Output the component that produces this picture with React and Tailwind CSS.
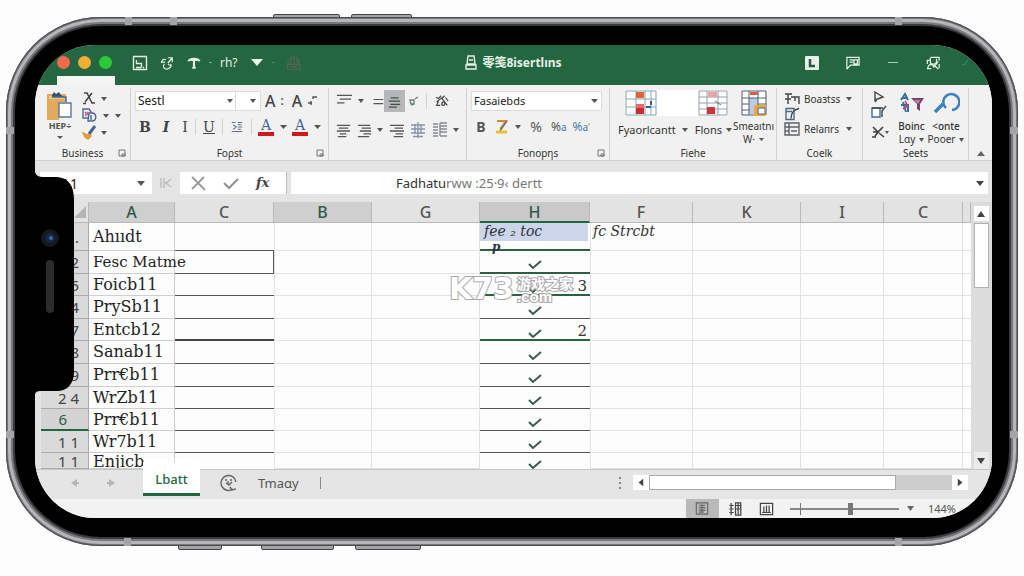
const Caret = ({ className = 'w-[6px] h-1 text-[#555]' }) => (
  <svg className={`shrink-0 ${className}`} viewBox="0 0 8 5" fill="currentColor" preserveAspectRatio="none">
    <path d="M0 0h8L4 5z" />
  </svg>
);

const Icon = ({ className = 'w-4 h-4', box = '0 0 16 16', children }) => (
  <svg
    className={`shrink-0 ${className}`}
    viewBox={box}
    fill="none"
    stroke="currentColor"
    strokeWidth="1.4"
  >
    {children}
  </svg>
);

const Tool = ({ label, className = '', children }) => (
  <button type="button" aria-label={label} className={`flex items-center justify-center shrink-0 ${className}`}>
    {children}
  </button>
);

const Group = ({ title, launcher, className, children }) => (
  <section className={`flex flex-col mt-[3px] h-[72px] border-r border-[#d2d2d2] ${className}`}>
    <div className="flex-1">{children}</div>
    <footer className="relative flex h-[14px] items-center justify-center text-[10px] leading-[14px] text-[#333]">
      {title}
      {launcher && (
        <button type="button" aria-label={`${title} options`} className="absolute right-1 top-[3px]">
          <Icon className="w-2 h-2 text-[#777]" box="0 0 8 8">
            <path d="M1 1h6v6H1zM4 5h3v2H4z" strokeWidth="1" />
          </Icon>
        </button>
      )}
    </footer>
  </section>
);

const Divider = () => <span className="w-px h-4 bg-[#d2d2d2] shrink-0" />;

/* rows of text lines used by the paragraph buttons */
const Lines = ({ d, className = 'w-[15px] h-[15px] text-[#555]' }) => (
  <Icon className={className}>
    <path d={d} />
  </Icon>
);

const LetterColor = () => (
  <span className="flex flex-col items-center w-4">
    <span className="font-['DejaVu_Serif',serif] text-[14px] leading-[14px] text-[#3d67a5]">A</span>
    <span className="h-1 w-full bg-[#d01818]" />
  </span>
);

const TitleBar = () => (
  <header className="h-10 bg-[#23663f] text-[#e6f0e9]">
    <div className="grid h-[31px] grid-cols-[1fr_auto_1fr] items-center pt-1">
      <div className="flex items-center">
        <div className="flex gap-2 pl-[22px]">
          <span className="w-[13px] h-[13px] rounded-full bg-[#f2694b]" />
          <span className="w-[13px] h-[13px] rounded-full bg-[#efae37]" />
          <span className="w-[13px] h-[13px] rounded-full bg-[#2bcb38]" />
        </div>
        <Tool label="Save" className="ml-5">
          <Icon>
            <path d="M1.500 1.500h13v13h-13zM4 12.500h5M4.500 5v3.500h5v4M11 12l1 1" />
          </Icon>
        </Tool>
        <Tool label="Link" className="ml-3">
          <Icon className="w-[14px] h-4">
            <path d="M9 2h5v5M14 2L9 8M7 4C4 3 1 5 2 8M1 7h5M5 9c-2 3-1 6 3 6 4-1 6-4 4-6M9 9l4 3" />
          </Icon>
        </Tool>
        <Tool label="Text" className="ml-[13px]">
          <Icon className="w-[14px] h-4">
            <path d="M1.500 6c2-4 11-4 13 0M4 4.500h8" strokeWidth="2.200" />
            <path d="M8 4v9M6 13.500h4" strokeWidth="2.400" />
          </Icon>
        </Tool>
        <span className="ml-2 w-[3px] h-px bg-[#7fa98e]" />
        <button type="button" className="ml-2 w-4 text-[12px] leading-4">rh?</button>
        <Tool label="More" className="ml-[15px]">
          <Caret className="w-3 h-[7px] text-[#eef5f0]" />
        </Tool>
        <span className="ml-[9px] w-[3px] h-px bg-[#4d8462]" />
        <Tool label="Print" className="ml-[11px]">
          <Icon className="w-4 h-4 text-[#4c6654]">
            <path d="M2 9C2 4 4 2 8 2s5 2 5 7M5 3v6M8 3v6M11 3v6M1.500 9.500h13v5h-13zM4 12h8" />
          </Icon>
        </Tool>
      </div>
      <h1 className="flex items-center gap-[5px] text-[12px] leading-4 font-bold font-['Noto_Sans','Noto_Sans_CJK_SC',sans-serif]">
        <Icon className="w-3 h-[15px]" box="0 0 12 15">
          <path d="M3 1h6l1 8H2zM1 10h10v4H1zM4 5h4" />
        </Icon>
        零笺8isertlıns
      </h1>
      <div className="flex items-center justify-end pr-[23px]">
        <Tool label="Account">
          <svg className="w-[14px] h-[14px]" viewBox="0 0 14 14">
            <rect width="14" height="14" rx="1" fill="#e8eeea" />
            <path d="M5 3v7h5" stroke="#2b5940" strokeWidth="2.500" fill="none" />
          </svg>
        </Tool>
        <Tool label="Comments" className="ml-[27px]">
          <Icon className="w-[14px] h-[14px]">
            <path d="M1 15V1.500h14v9H5L1 15M4 4.500h11M4 7h4M9 5v4h4V5" />
          </Icon>
        </Tool>
        <Tool label="Minimize" className="ml-7">
          <span className="w-[10px] h-px bg-[#a9cdd0]" />
        </Tool>
        <Tool label="Restore" className="ml-7">
          <Icon className="w-[14px] h-[14px]">
            <path d="M5 1.500h10v4M1.500 9V5h3M5 2v5c0 3 6 3 7 0V3M2 14.500c0-3 2-5 5-5l2 3 5-6M9 10l5 5M1 14.500h5M15 9v5" />
          </Icon>
        </Tool>
        <Tool label="Done" className="ml-[21px]">
          <Icon className="w-2 h-2 text-[#3f9563]" box="0 0 8 8">
            <path d="M1 5l2 1 4-5" strokeWidth="1" />
          </Icon>
        </Tool>
      </div>
    </div>
    <div className="ml-[22px] h-[9px] w-[58px] bg-[#f4f4f4]" />
  </header>
);

const ClipboardGroup = () => (
  <Group title="Business" launcher className="w-[96px] shrink-0">
    <div className="flex pt-[3px] pl-3">
      <Tool label="Paste" className="w-[26px] flex-col">
        <svg className="w-[26px] h-[28px]" viewBox="0 0 26 28">
          <path d="M0 2h19v8h-7v18H0z" fill="#e3a95c" />
          <path d="M2 4h16v3H2z" fill="#e8c68e" />
          <path d="M5 3l2-3 2 2 3-2 2 3 3 2H5z" fill="#38536b" />
          <path d="M5 5h14v5" stroke="#3f6a94" strokeWidth="1.4" fill="none" />
          <path d="M12 11h12v14H12z" fill="#fff" stroke="#56789b" strokeWidth="1.4" />
        </svg>
        <span className="text-[9px] leading-3 font-bold text-[#555]">HEP÷</span>
        <Caret className="mt-1 w-[6px] h-[3px] text-[#555]" />
      </Tool>
      <div className="ml-[9px] flex flex-col gap-[2px]">
        <Tool label="Cut" className="gap-[5px] justify-start">
          <Icon className="w-[14px] h-[15px] text-[#444]" box="0 0 14 15">
            <path d="M2 2h3l5 10h3M10 2L3 11" strokeWidth="1.500" />
            <path d="M1 12.500h3" />
          </Icon>
          <Caret />
        </Tool>
        <Tool label="Copy" className="gap-[6px] justify-start">
          <Icon className="w-[15px] h-[15px]" box="0 0 15 15">
            <path d="M1 1h6l2 3v6H1z" stroke="#51698b" />
            <path d="M3 4l4 4M3 8l3-4" stroke="#c0628f" />
            <path d="M7 5h3c5 0 5 8 0 8H6z" fill="#f1f1f1" stroke="#46639a" />
            <path d="M9 7v5" stroke="#46639a" />
          </Icon>
          <Caret />
          <Caret />
        </Tool>
        <Tool label="Format painter" className="gap-1 justify-start">
          <Icon className="w-[15px] h-[15px]" box="0 0 15 15">
            <path d="M1 8l4 2 3-1 1 2-3 3-3-2z" fill="#e9a23b" stroke="#e09a33" />
            <path d="M7 9l6-8" stroke="#46668c" strokeWidth="3" />
          </Icon>
          <Caret />
        </Tool>
      </div>
    </div>
  </Group>
);

const FontGroup = () => (
  <Group title="Foρst" launcher className="w-[198px] shrink-0">
    <div className="flex items-center pt-[3px] pl-1">
      <div className="relative flex items-center">
        <select
          aria-label="Font"
          className="appearance-none w-[101px] h-5 pl-[2px] bg-white border border-[#dcdcdc] text-[12px] leading-4 text-[#222]"
        >
          <option>Sestl</option>
        </select>
        <Caret className="absolute right-[3px] w-[6px] h-1 text-[#555]" />
      </div>
      <div className="relative flex items-center">
        <select aria-label="Font size" className="appearance-none w-[25px] h-5 bg-white border border-l-0 border-[#dcdcdc]">
          <option></option>
        </select>
        <Caret className="absolute right-[5px] w-[6px] h-1 text-[#555]" />
      </div>
      <Tool label="Increase font size" className="ml-1 gap-[5px] text-[16px] leading-5 font-medium text-[#444]">
        A<span className="text-[12px]">:</span>
      </Tool>
      <Tool label="Decrease font size" className="ml-2 gap-[6px] text-[16px] leading-5 font-medium text-[#444]">
        A
        <Icon className="w-[10px] h-[10px] text-[#555]" box="0 0 10 10">
          <path d="M5 3V1h4M0 7h4M3 5v4" />
        </Icon>
      </Tool>
    </div>
    <div className="flex items-center pt-1 pl-2 h-7 font-['DejaVu_Serif',serif] text-[14px] leading-5 text-[#444]">
      <Tool label="Bold" className="w-3 font-bold">B</Tool>
      <Tool label="Italic" className="ml-[9px] w-3 italic font-bold">I</Tool>
      <Tool label="Upright" className="ml-[9px] w-2">I</Tool>
      <span className="w-[6px]" />
      <Divider />
      <Tool label="Underline" className="mx-[6px] w-[14px] underline">U</Tool>
      <Divider />
      <Tool label="Borders" className="mx-2 w-3">
        <Lines d="M1 2h5M9 2h6M3 5l4 3-4 3M9 5h5M9 8h6M9 11h4M1 14h14" className="w-3 h-[14px] text-[#64748b]" />
      </Tool>
      <Divider />
      <Tool label="Fill colour" className="ml-[6px] gap-[6px]">
        <LetterColor />
        <Caret className="w-[7px] h-1 text-[#555]" />
      </Tool>
      <Tool label="Font colour" className="ml-[5px] gap-[6px]">
        <LetterColor />
        <Caret className="w-[7px] h-1 text-[#555]" />
      </Tool>
    </div>
  </Group>
);

const AlignGroup = () => (
  <Group title="" className="w-[138px] shrink-0">
    <div className="flex items-center pt-[2px] pl-2 h-6">
      <Tool label="Align top" className="gap-[6px]">
        <Lines d="M0 1.500h16M3 5.500h12M0 9.500h8" />
        <Caret />
      </Tool>
      <Tool label="Align middle" className="ml-2">
        <Lines d="M2 6h13M2 11.500h13" className="w-[12px] h-[14px] text-[#555]" />
      </Tool>
      <Tool label="Align bottom" className="w-[21px] h-[22px] bg-[#b6b7b9]">
        <Lines d="M3 3.500h10M1 7.500h14M3 11.500h12M1 15h10" className="w-[13px] h-[13px] text-[#45524b]" />
      </Tool>
      <Tool label="Indent" className="ml-1">
        <Icon className="w-[10px] h-[10px] text-[#6b8087]" box="0 0 10 10">
          <path d="M1 4h4v4H2zM6 3l3-2M5 8l-3 1" />
        </Icon>
      </Tool>
      <span className="w-[7px]" />
      <Divider />
      <Tool label="Orientation" className="ml-2">
        <Icon className="w-[14px] h-4 text-[#444]">
          <path d="M1 4l3 1 3-3M2 9c3-3 6-4 9-7M8 5l6 8M4 8l-2 5h4M8 10c2-2 4-1 3 2-1 2-4 1-3-2M12 4l3 4" />
        </Icon>
      </Tool>
    </div>
    <div className="flex items-center pt-1 pl-[7px] h-8">
      <Tool label="Left">
        <Lines d="M1 2.500h14M3 5.500h10M1 8.500h14M4 11.500h7M2 14.500h9" />
      </Tool>
      <Tool label="Centre" className="ml-[6px] gap-[5px]">
        <Lines d="M1 2.500h13M5 5.500h10M3 8.500h12M7 11.500h8M1 14.500h12" />
        <Caret />
      </Tool>
      <Tool label="Right" className="ml-[6px]">
        <Lines d="M1 2.500h15M6 5.500h9M1 8.500h15M7 11.500h8M5 14.500h10" />
      </Tool>
      <Tool label="Merge" className="ml-[6px]">
        <Lines d="M1 3h14M1 7h14M1 11h14M3 14.500h10M8 0v16M5 2v10M11 2v10" className="w-4 h-4 text-[#8795ad]" />
      </Tool>
      <Tool label="Wrap" className="ml-[6px] gap-[5px]">
        <Lines d="M1 2h5M1 5h5M1 8h5M1 11h5M1 14h5M8 1h7M8 4h7M8 7h7M8 10h7M8 14h7M8 1v13" className="w-4 h-4 text-[#858b96]" />
        <Caret />
      </Tool>
    </div>
  </Group>
);

const NumberGroup = () => (
  <Group title="Fonopηs" launcher className="w-[143px] shrink-0">
    <div className="flex pt-[3px] pl-1">
      <div className="relative flex items-center">
        <select
          aria-label="Number format"
          className="appearance-none w-[131px] h-5 pl-[2px] bg-white border border-[#dcdcdc] text-[11px] leading-4 text-[#222]"
        >
          <option>Fasaiebds</option>
        </select>
        <Caret className="absolute right-1 w-[7px] h-1 text-[#555]" />
      </div>
    </div>
    <div className="flex items-center pt-1 pl-2 h-7 text-[12px] leading-5 text-[#555]">
      <Tool label="Currency" className="w-3 text-[14px] font-bold">B</Tool>
      <Tool label="Accounting" className="ml-2 gap-[7px]">
        <Icon className="w-[13px] h-[14px]" box="0 0 13 14">
          <path d="M2 1h9L5 9" stroke="#d08a2e" strokeWidth="2" />
          <path d="M12 1L5 11" stroke="#667789" />
          <path d="M1 12h11" stroke="#ecc22c" strokeWidth="3" />
        </Icon>
        <Caret />
      </Tool>
      <Tool label="Percent" className="ml-2 w-[14px] text-[14px]">%</Tool>
      <Tool label="Increase decimal" className="ml-2">
        %<span className="text-[10px] text-[#3f76b0]">a</span>
      </Tool>
      <Tool label="Decrease decimal" className="ml-[6px]">
        <span className="text-[#4e80a0]">%</span>
        <span className="text-[10px] text-[#3f76b0]">a</span>
        <span className="text-[10px] text-[#d0a040]">’</span>
      </Tool>
    </div>
  </Group>
);

const StylesGroup = () => (
  <Group title="Fiehe" className="flex-1 min-w-[167px]">
    <div className="flex pt-[2px] pl-2 text-[11px] leading-4 text-[#333]">
      <div>
        <div className="ml-[7px] flex h-[26px] w-[103px] justify-between bg-white">
          <svg className="w-8 h-[26px]" viewBox="0 0 32 26">
            <path d="M1 1h30v24H1zM1 9h30M1 17h30M11 1v24M20 1v24M26 1v24" stroke="#84a5ad" fill="none" />
            <path d="M11 2h8v6h-8z" fill="#e2623a" />
            <path d="M11 14h8v4h-8z" fill="#e86a6a" />
            <path d="M11 18h8v6h-8z" fill="#c92f2c" />
            <path d="M21 17h5M26 11v4" stroke="#325b9b" strokeWidth="2" />
          </svg>
          <svg className="w-[30px] h-[26px]" viewBox="0 0 30 26">
            <path d="M1 1h28v24H1zM1 7h28M1 13h28M1 19h28M9 1v24M20 1v24" stroke="#929fa5" fill="none" />
            <path d="M10 2h9v5h-9z" fill="#e7a4a0" />
            <path d="M9 17h8v7H9z" fill="#c9383c" />
            <path d="M17 11l6 4" stroke="#5d7a86" />
          </svg>
        </div>
        <div className="flex items-center pt-[6px]">
          <button type="button" className="flex items-center gap-[6px]">
            Fyaorlcantt <Caret />
          </button>
          <button type="button" className="flex items-center gap-1 ml-[7px]">
            Flons <Caret />
          </button>
        </div>
      </div>
      <button type="button" className="ml-px flex flex-col items-center text-[10px] leading-[13px]">
        <svg className="w-[26px] h-[27px]" viewBox="0 0 26 27">
          <path d="M1 1h23v23H1z" fill="#fff" />
          <path d="M8 8h9v16H8z" fill="#bccbe2" />
          <path d="M1 1h24v24H1zM1 8h24M1 14h7M1 20h7M17 14h8M8 1v24M17 1v24" stroke="#4f6176" fill="none" />
          <path d="M9 2h8v3H9z" fill="#e05b3c" />
          <path d="M13 15h12v11H13z" fill="#f0a63a" />
          <path d="M17 18h7v6h-7z" fill="#fff" stroke="#3f6a94" />
        </svg>
        <span className="mt-[3px]">Smeaıtnı</span>
        <span className="flex items-center gap-1">
          W· <Caret className="w-[5px] h-[3px] text-[#555]" />
        </span>
      </button>
    </div>
  </Group>
);

const CellsGroup = () => (
  <Group title="Coelk" className="w-[86px] shrink-0">
    <div className="flex flex-col pl-[7px] pt-1 text-[10px] leading-[14px] text-[#333]">
      <button type="button" className="flex items-center gap-1">
        <Icon className="w-4 h-[14px] text-[#444]" box="0 0 16 14">
          <path d="M1 2h7M4 2v10M1 7h6M7 5h8v7M11 5v4" />
        </Icon>
        <span className="w-[38px] text-left">Boaɜtss</span>
        <Caret />
      </button>
      <Tool label="Delete cells" className="self-start">
        <Icon className="w-4 h-4" box="0 0 16 15">
          <path d="M2 2h8v11H2zM2 5h6" stroke="#51697d" />
          <path d="M7 12c0-5 3-9 8-10" stroke="#3b4c5b" />
        </Icon>
      </Tool>
      <button type="button" className="flex items-center gap-1">
        <Icon className="w-4 h-[14px] text-[#5c6368]" box="0 0 16 14">
          <path d="M1 1h14v12H1zM5 1v12M1 5h4M5 5h10M7 9h6M1 9h4" />
        </Icon>
        <span className="w-[38px] text-left">Relaпrs</span>
        <Caret />
      </button>
    </div>
  </Group>
);

const EditGroup = () => (
  <Group title="Seets" className="w-[106px] shrink-0">
    <div className="flex pl-2 pt-[3px] text-[10px] leading-[13px] text-[#333]">
      <div className="flex w-6 flex-col gap-[2px]">
        <Tool label="Sum" className="justify-start">
          <Icon className="w-[14px] h-3 text-[#444]" box="0 0 14 12">
            <path d="M4 1l8 5-8 3zM4 11l2-3" />
          </Icon>
        </Tool>
        <Tool label="Fill" className="justify-start">
          <Icon className="w-4 h-[14px]" box="0 0 16 14">
            <path d="M1 3h8v9H1z" stroke="#3c6d99" fill="#fff" />
            <path d="M1 3h11M11 12V6l4-5" stroke="#444" />
          </Icon>
        </Tool>
        <Tool label="Clear" className="justify-start pt-1">
          <Icon className="w-[14px] h-[14px] text-[#3f3f3f]" box="0 0 14 14">
            <path d="M2 2l5 5 5-5M2 7h6M4 11l4-5M1 12h4M8 8l5 4" strokeWidth="1.600" />
          </Icon>
          <Caret className="w-1 h-[3px] text-[#555]" />
        </Tool>
      </div>
      <button type="button" className="flex w-[33px] flex-col items-center">
        <svg className="w-[26px] h-[24px] mb-[5px]" viewBox="0 0 26 22" fill="none">
          <path d="M2 8l4-6 3 6M4 6h4M2 13h7v7M4 10l3 10" stroke="#356fa5" strokeWidth="2" />
          <path d="M6 9l3 5-5 3" stroke="#b8446a" strokeWidth="1.500" />
          <path d="M12 6h13l-4 6v7l-3-2v-5z" fill="#7d4270" />
          <path d="M15 8h6l-2 4z" fill="#b98aa8" />
        </svg>
        <span className="font-medium">Boinc</span>
        <span className="flex items-center gap-1">
          Lɑy <Caret className="w-[5px] h-1 text-[#555]" />
        </span>
      </button>
      <button type="button" className="flex w-9 flex-col items-center">
        <svg className="w-[27px] h-6 mb-[5px]" viewBox="0 0 27 24" fill="none" stroke="#3f80be">
          <path d="M13 17a8 8 0 1 1 6 2" strokeWidth="2.500" />
          <path d="M10 13l-8 8" strokeWidth="3.500" />
        </svg>
        <span className="font-medium">&lt;onte</span>
        <span className="flex items-center gap-1">
          Pooer <Caret className="w-[5px] h-1 text-[#555]" />
        </span>
      </button>
    </div>
  </Group>
);

const Ribbon = () => (
  <div className="flex h-[76px] border-b border-[#cfcfcf] bg-[#f1f1f1]">
    <ClipboardGroup />
    <FontGroup />
    <AlignGroup />
    <NumberGroup />
    <StylesGroup />
    <CellsGroup />
    <EditGroup />
    <Tool label="Collapse ribbon" className="w-6 items-end pb-1">
      <Caret className="w-[8px] h-[5px] rotate-180 text-[#666]" />
    </Tool>
  </div>
);

const FormulaBar = () => (
  <div className="flex items-center gap-1 bg-[#e4e4e4] pt-[11px] pb-2 pl-[5px] pr-1">
    <div className="relative flex items-center">
      <input
        aria-label="Name box"
        className="w-[112px] h-[22px] bg-white pl-[21px] text-[14px] leading-5 text-[#222]"
        defaultValue="A1"
      />
      <Caret className="absolute right-[7px] w-2 h-[5px] text-[#555]" />
    </div>
    <Icon className="w-5 h-3 text-[#bdbdbd]" box="0 0 20 12">
      <path d="M5 1v10M8 1v10M15 2L9 7M9 5l6 5" />
    </Icon>
    <div className="flex h-[22px] w-[107px] items-center gap-[17px] border-r border-[#bcbcbc] bg-white pl-[10px]">
      <Tool label="Cancel">
        <Icon className="w-4 h-4 text-[#9a9a9a]">
          <path d="M2 2l13 13M14 2L2 14" strokeWidth="1.800" />
        </Icon>
      </Tool>
      <Tool label="Enter">
        <Icon className="w-4 h-4 text-[#8f8f8f]">
          <path d="M1 8l5 5 9-9" strokeWidth="2" />
        </Icon>
      </Tool>
      <Tool label="Insert function" className="font-['DejaVu_Serif',serif] italic font-bold text-[13px] leading-4 text-[#444]">
        fx
      </Tool>
    </div>
    <div className="flex h-[22px] flex-1 items-center bg-white pl-[105px] pr-1 text-[13px] leading-5">
      <span className="text-[#333]">Fadhatu</span>
      <span className="flex-1 text-[#777]">rww :25·9‹ dertt</span>
      <Tool label="Expand formula bar">
        <Caret className="w-2 h-[5px] text-[#444]" />
      </Tool>
    </div>
  </div>
);

const shaded = 'bg-[#cfcfcf] text-[#2f5a45]';

const columns = [
  { name: '', width: 'w-[48px]' },
  { name: 'A', width: 'w-[86px]', tone: shaded },
  { name: 'C', width: 'w-[99px]' },
  { name: 'B', width: 'w-[98px]', tone: shaded },
  { name: 'G', width: 'w-[108px]' },
  { name: 'H', width: 'w-[110px]', tone: 'bg-[#c9c9c9] text-[#2f5a45] border-b-2 border-b-[#22663f]' },
  { name: 'F', width: 'w-[103px]' },
  { name: 'K', width: 'w-[108px]' },
  { name: 'I', width: 'w-[83px]' },
  { name: 'C', width: 'w-[79px]' },
  { name: '', width: '' },
];

const green = 'border-b-2 border-b-[#2c6044]';
const dark = 'border-b border-b-[#555]';

const rows = [
  { n: '.', a: 'Ahııdt', height: 'h-7', h: green },
  { n: '2', a: 'Fesc Matme', height: 'h-[23px]', c: 'border-b border-r border-[#555]', h: green, check: true, small: true },
  { n: '5', a: 'Foicb11', height: 'h-[22px]', c: dark, h: green, check: true, count: '3' },
  { n: '4', a: 'PrySb11', height: 'h-[23px]', c: dark, h: dark, check: true },
  { n: '7', a: 'Entcb12', height: 'h-[22px]', c: 'border-b-2 border-b-[#444]', h: green, check: true, count: '2' },
  { n: '8', a: 'Sanab11', height: 'h-[23px]', c: dark, h: dark, check: true },
  { n: '9', a: 'Prr€b11', height: 'h-[23px]', c: dark, h: dark, check: true },
  { n: '2 4', a: 'WrZb11', height: 'h-[22px]', c: dark, h: dark, check: true },
  { n: '6', a: 'Prr€b11', height: 'h-[22px]', c: dark, h: dark, check: true, active: true },
  { n: '1 1', a: 'Wr7b11', height: 'h-[22px]', c: dark, h: dark, check: true },
  { n: '1 1', a: 'Enjicb', height: 'h-4', check: true, last: true },
];

const Sheet = () => (
  <table className="flex-1 w-full table-fixed border-separate border-spacing-0 bg-[#fdfdfd]">
    <thead>
      <tr className="h-[21px]">
        {columns.map((col, i) => (
          <th
            key={i}
            scope="col"
            className={`${col.width} p-0 border-r border-b border-[#b9b9b9] text-[16px] leading-4 font-medium ${
              col.tone || 'bg-[#e3e3e3] text-[#555]'
            }`}
          >
            {i === 0 ? (
              <svg className="ml-auto mr-[2px] w-3 h-3" viewBox="0 0 12 12">
                <path d="M12 0v12H0z" fill="#b5b5b5" />
              </svg>
            ) : (
              col.name
            )}
          </th>
        ))}
      </tr>
    </thead>
    <tbody>
      {rows.map((row, r) => (
        <tr key={r} className={row.height}>
          <th
            scope="row"
            className={`p-0 border-r border-b border-[#aaa] text-[15px] leading-4 font-normal ${
              row.active ? 'bg-[#d3d3d3] border-b-2 border-b-[#22663f] text-[#2f5a45]' : 'bg-[#dadada] text-[#444]'
            }`}
          >
            <div className={`text-right ${row.active ? 'pr-[21px]' : 'pr-[9px]'} ${row.last ? 'h-[15px] overflow-hidden' : ''}`}>
              {row.n}
            </div>
          </th>
          <td className="p-0 border-r border-b border-[#cfcfcf]">
            <div
              className={`whitespace-nowrap pl-1 font-['DejaVu_Serif',serif] leading-[18px] text-[#222] ${
                row.small ? 'text-[15px]' : 'text-[16px]'
              } ${row.last ? 'h-[15px] overflow-hidden' : ''}`}
            >
              {row.a}
            </div>
          </td>
          <td className={`p-0 ${r === 0 ? dark : row.c || ''}`} />
          <td className="p-0 border-x border-b border-[#e2e2e2]" />
          <td className="p-0 border-r border-b border-[#e2e2e2]" />
          <td className={`p-0 ${row.h || ''}`}>
            {r === 0 && (
              <div className="relative h-[26px] font-['DejaVu_Serif',serif] italic text-[14px] leading-4 text-[#2e3340]">
                <div className="mr-[2px] h-[18px] bg-[#cdd5ea] pl-1">fee ₂ toc</div>
                <span className="absolute left-3 top-4 text-[12px] font-bold">p</span>
              </div>
            )}
            {row.check && (
              <div className="grid h-[15px] grid-cols-3 items-center">
                <span />
                <svg className="mx-auto mt-[6px] w-[14px] h-[10px]" viewBox="0 0 14 10" fill="none" stroke="#3b5a48" strokeWidth="2">
                  <path d="M1 4l4 4 8-7" />
                </svg>
                <span className="pr-[3px] text-right font-['DejaVu_Serif',serif] text-[15px] leading-[18px] text-[#333]">
                  {row.count}
                </span>
              </div>
            )}
          </td>
          <td className="p-0 align-top border-x border-b border-[#e2e2e2]">
            {r === 0 && (
              <div className="pl-[2px] font-['DejaVu_Serif',serif] italic text-[14px] leading-4 text-[#333]">fc Strcbt</div>
            )}
          </td>
          <td className="p-0 border-r border-b border-[#e2e2e2]" />
          <td className="p-0 border-r border-b border-[#e2e2e2]" />
          <td className="p-0 border-r border-b border-[#e2e2e2]" />
          <td className="p-0 border-b border-[#e2e2e2]" />
        </tr>
      ))}
    </tbody>
  </table>
);

const VerticalScroll = () => (
  <div className="flex w-[21px] shrink-0 flex-col items-center bg-[#dcdcdc] pt-1 pr-px">
    <Tool label="Scroll up" className="w-[15px] h-[15px] bg-white">
      <Caret className="w-2 h-[6px] rotate-180 text-[#444]" />
    </Tool>
    <div className="mt-[2px] h-[65px] w-[15px] border border-[#b2b2b2] bg-white" />
    <div className="flex-1" />
    <Tool label="Scroll down" className="w-[15px] h-[17px] bg-[#ececec]">
      <Caret className="w-2 h-[6px] text-[#444]" />
    </Tool>
  </div>
);

const SheetTabs = () => (
  <div className="flex h-[30px] items-center border-t border-[#c6c6c6] bg-[#e5e5e5] pb-1 text-[13px] leading-4 text-[#555]">
    <Tool label="Previous sheet" className="ml-9">
      <svg className="w-2 h-2" viewBox="0 0 8 8"><path d="M6 0v3h2v2H6v3L0 4z" fill="#b5b5b5" /></svg>
    </Tool>
    <Tool label="Next sheet" className="ml-7">
      <svg className="w-2 h-2" viewBox="0 0 8 8"><path d="M0 3h2V0l6 4-6 4V5H0z" fill="#b5b5b5" /></svg>
    </Tool>
    <button
      type="button"
      className="relative z-10 -mt-2 ml-7 h-[34px] w-[57px] border-b-[3px] border-[#22663f] bg-white pt-1 font-medium text-[#22663f]"
    >
      Lbatt
    </button>
    <Tool label="New sheet" className="ml-5">
      <Icon className="w-[18px] h-[18px] text-[#666]" box="0 0 18 18">
        <path d="M16 8a7.500 7.500 0 1 0-3 7M16 15l-4 1-2-3" />
        <path d="M5 6h2M10 6h2M6 9l3 2 3-3M8 7v3" />
      </Icon>
    </Tool>
    <button type="button" className="ml-5">Tmaɑy</button>
    <span className="ml-[21px] h-3 w-px bg-[#888]" />
    <div className="ml-auto flex flex-col gap-[3px]">
      <span className="size-[2px] bg-[#888]" />
      <span className="size-[2px] bg-[#888]" />
      <span className="size-[2px] bg-[#888]" />
    </div>
    <div className="ml-3 mr-6 flex h-[15px] w-[335px] bg-[#cdcdcd]">
      <Tool label="Scroll left" className="w-4 bg-white">
        <Caret className="w-2 h-[5px] rotate-90 text-[#444]" />
      </Tool>
      <div className="w-[247px] border border-[#aaa] bg-white" />
      <Tool label="Scroll right" className="ml-auto w-4 bg-white">
        <Caret className="w-2 h-[5px] -rotate-90 text-[#444]" />
      </Tool>
    </div>
  </div>
);

const StatusBar = () => (
  <footer className="flex h-[19px] items-center justify-end bg-[#f2f2f2] pr-9 text-[11px] leading-4 text-[#555]">
    <Tool label="Normal view" className="h-full w-[33px] bg-[#b9b9b9]">
      <Icon className="w-[14px] h-[13px] text-[#666]">
        <path d="M1 1h14v14H1zM4 4h8M4 7h8M4 10h8M4 12.500h6M8 3v10" />
      </Icon>
    </Tool>
    <Tool label="Page layout" className="ml-[9px]">
      <Icon className="w-[15px] h-[14px] text-[#444]">
        <path d="M3 1v14M1 4h5M1 8h5M1 12h5M8 1v14h6V1zM8 4h7M8 8h7M11 1v14" />
      </Icon>
    </Tool>
    <Tool label="Page break" className="ml-4">
      <Icon className="w-[15px] h-[14px] text-[#444]">
        <path d="M1 1.500h14v13H1zM5 5v7M8 4v8M11 4v8M3 12h10" />
      </Icon>
    </Tool>
    <div className="relative ml-4 flex items-center">
      <input
        type="range"
        aria-label="Zoom"
        defaultValue="56"
        className="appearance-none w-[109px] h-3 bg-[linear-gradient(#888,#888)] bg-[length:100%_2px] bg-center bg-no-repeat [&::-webkit-slider-thumb]:appearance-none [&::-webkit-slider-thumb]:w-[5px] [&::-webkit-slider-thumb]:h-3 [&::-webkit-slider-thumb]:bg-[#777]"
      />
      <span className="absolute left-[10px] h-3 w-px bg-[#777]" />
    </div>
    <Caret className="ml-2 w-[7px] h-[5px] text-[#666]" />
    <span className="ml-[14px]">144%</span>
  </footer>
);

const Notch = () => (
  <div className="absolute left-0 top-[127px] z-20">
    <svg className="w-10 h-[224px]" viewBox="0 0 40 224">
      <path d="M0 0C1 4 4 5 9 5h13c12 1 17 9 17 23v172c0 12-7 19-17 19H6c-4 0-6 1-6 4z" fill="#000" />
      <circle cx="15" cy="66" r="9" fill="#16181c" />
      <circle cx="15" cy="66" r="5" fill="#16254a" />
      <circle cx="16" cy="66" r="2" fill="#3f62a8" />
      <rect x="11" y="88" width="8" height="53" rx="4" fill="#2c2c2c" />
    </svg>
  </div>
);

const Watermark = () => (
  <div className="pointer-events-none absolute left-[414px] top-[228px] z-20 flex items-center gap-[3px] font-bold text-white [-webkit-text-stroke:2px_#a8a8a8] [paint-order:stroke]">
    <span className="font-['DejaVu_Sans',sans-serif] text-[30px] leading-8">K73</span>
    <span className="flex flex-col">
      <span className="font-['Noto_Sans_CJK_SC',sans-serif] text-[14px] leading-4">游戏之家</span>
      <span className="font-['Liberation_Sans',sans-serif] text-[15px] leading-3">.com</span>
    </span>
  </div>
);

/* antenna bands on the frame */
const bands = [
  'left-[119px] top-0 w-[7px] h-2',
  'left-[164px] top-0 w-[7px] h-2',
  'right-[116px] top-0 w-[7px] h-2',
  'left-[118px] bottom-0 w-[7px] h-2',
  'right-[116px] bottom-0 w-[7px] h-2',
  'left-0 top-[110px] w-2 h-[7px]',
  'left-0 bottom-[108px] w-2 h-[7px]',
  'right-0 top-[110px] w-2 h-[7px]',
  'right-0 bottom-[108px] w-2 h-[7px]',
];

/* side keys */
const keys = [
  'left-[267px] -top-[3px] w-[67px]',
  'left-[345px] -top-[3px] w-[61px]',
  'left-[172px] -bottom-1 w-11',
  'left-[255px] -bottom-1 w-[73px]',
  'left-[349px] -bottom-1 w-[66px]',
];

export default function App() {
  return (
    <main className="min-h-screen bg-[#fdfdfd] pt-[17px] px-[6px] font-['Noto_Sans',sans-serif]">
      <div className="relative">
        {keys.map((key) => (
          <span key={key} className={`absolute h-[6px] rounded-[2px] border border-[#444] bg-[#a3a5a7] ${key}`} />
        ))}
        <div className="relative rounded-[95px] bg-[#3a3a3c] p-[9px] shadow-[inset_0_0_0_1px_#4c4c4e,inset_0_0_0_2px_#77787b,inset_0_0_0_5px_#b4b6b9,inset_0_0_0_7px_#77787a]">
          {bands.map((band) => (
            <span key={band} className={`absolute bg-[#a2a5a8] ${band}`} />
          ))}
          <div className="rounded-[86px] bg-black py-[19px] pl-5 pr-[17px]">
            <div className="relative overflow-hidden rounded-[60px] bg-[#f2f2f2]">
              <TitleBar />
              <Ribbon />
              <FormulaBar />
              <div className="flex bg-[#e3e3e3] pl-[6px]">
                <Sheet />
                <VerticalScroll />
              </div>
              <SheetTabs />
              <StatusBar />
              <Notch />
              <Watermark />
            </div>
          </div>
        </div>
      </div>
    </main>
  );
}
